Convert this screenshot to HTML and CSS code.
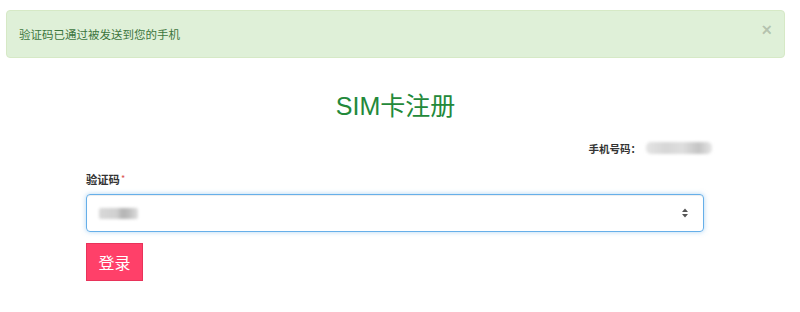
FILE: index.html
```html
<!DOCTYPE html>
<html lang="zh">
<head>
<meta charset="utf-8">
<title>SIM卡注册</title>
<link rel="stylesheet" href="styles.css">
</head>
<body>
<div class="page">
  <div class="alert">
    <span class="alert-text">验证码已通过被发送到您的手机</span>
    <span class="close">×</span>
  </div>
  <h1 class="title">SIM卡注册</h1>
  <div class="form">
    <div class="phone-row">
      <span class="phone-label">手机号码：</span>
      <span class="blur blur-phone"></span>
    </div>
    <div class="field-label">验证码<span class="req">*</span></div>
    <div class="input">
      <span class="blur blur-code"></span>
      <svg class="spin" width="8" height="12" viewBox="0 0 8 12">
        <path d="M1 5 L4 1.5 L7 5 Z" fill="#555"/>
        <path d="M1 7 L4 10.5 L7 7 Z" fill="#555"/>
      </svg>
    </div>
    <button class="btn">登录</button>
  </div>
</div>
</body>
</html>
```

FILE: styles.css
```css
* { box-sizing: border-box; }
html, body { margin: 0; padding: 0; background: #fff; }
body {
  font-family: "Microsoft YaHei", "Noto Sans CJK SC", "Liberation Sans", sans-serif;
  color: #333;
}
.page {
  padding: 10px 15px 0 6px;
  width: 800px;
}
.alert {
  display: flex;
  justify-content: space-between;
  align-items: center;
  height: 48px;
  padding: 0 12px 0 12px;
  background: #dff0d8;
  border: 1px solid #d6e9c6;
  border-radius: 4px;
  color: #3c763d;
  font-size: 11.5px;
  line-height: 18px;
}
.close {
  font-family: "Liberation Sans", sans-serif;
  font-size: 18px;
  font-weight: bold;
  color: rgba(0,0,0,0.2);
  line-height: 18px;
  margin-top: -8px;
}
.title {
  margin: 33px 0 0 0;
  text-align: center;
  font-family: "Liberation Sans", "Noto Sans CJK SC", sans-serif;
  font-weight: normal;
  font-size: 25px;
  line-height: 30px;
  color: #23893a;
}
.form {
  margin: 0 0 0 80px;
  width: 618px;
}
.phone-row {
  display: flex;
  justify-content: flex-end;
  align-items: center;
  margin: 19px -8px 0 0;
  height: 16px;
}
.phone-label {
  font-size: 10.5px;
  font-weight: bold;
  color: #333;
}
.blur {
  display: inline-block;
  background: #c8c8c8;
  filter: blur(1.6px);
  border-radius: 2px;
}
.blur-phone {
  width: 66px;
  height: 12px;
  margin-left: 5px;
  border-radius: 5px;
  background: linear-gradient(90deg, #e4e4e4 0%, #d6d6d6 30%, #dedede 55%, #c4c4c4 80%, #e6e6e6 100%);
}
.field-label {
  margin-top: 15px;
  font-size: 11.3px;
  font-weight: bold;
  line-height: 16px;
  color: #333;
}
.req {
  color: #d9534f;
  font-weight: normal;
  font-size: 9px;
  vertical-align: top;
  margin-left: 1px;
}
.input {
  display: flex;
  align-items: center;
  justify-content: space-between;
  margin-top: 7px;
  height: 38px;
  padding: 0 14px 0 12px;
  border: 1px solid #66afe9;
  border-radius: 4px;
  box-shadow: inset 0 1px 1px rgba(0,0,0,0.075), 0 0 5px rgba(102,175,233,0.5);
}
.blur-code {
  width: 39px;
  height: 11px;
  background: linear-gradient(90deg, #d8d8d8 0%, #d0d0d0 45%, #b4b4b4 60%, #bcbcbc 75%, #dedede 100%);
}
.spin { display: block; }
.btn {
  display: block;
  margin-top: 11px;
  width: 57px;
  height: 38px;
  padding: 0;
  border: 1px solid #e8335a;
  border-radius: 0;
  background: #ff4069;
  color: #fff;
  font-family: "Microsoft YaHei", "Noto Sans CJK SC", sans-serif;
  font-size: 16px;
  line-height: 36px;
}
```
